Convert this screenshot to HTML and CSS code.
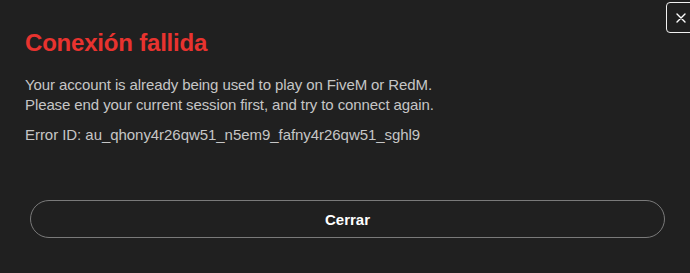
FILE: index.html
```html
<!DOCTYPE html>
<html lang="es">
<head>
<meta charset="utf-8">
<title>Conexión fallida</title>
<link rel="stylesheet" href="styles.css">
</head>
<body>
<div class="modal">
  <h1 class="title">Conexión fallida</h1>
  <p class="text">Your account is already being used to play on FiveM or RedM.<br>Please end your current session first, and try to connect again.</p>
  <p class="text error">Error ID: au_qhony4r26qw51_n5em9_fafny4r26qw51_sghl9</p>
  <button class="close-btn" type="button">Cerrar</button>
  <button class="x-btn" type="button" aria-label="Cerrar">
    <svg width="10" height="10" viewBox="0 0 10 10"><path d="M1 1 L9 9 M9 1 L1 9" stroke="#fff" stroke-width="1.4" stroke-linecap="round"/></svg>
  </button>
</div>
</body>
</html>
```
FILE: styles.css
```css
html, body {
  margin: 0;
  padding: 0;
  background: #202020;
}
body {
  width: 690px;
  height: 273px;
  overflow: hidden;
  font-family: "Liberation Sans", Arial, sans-serif;
}
.modal {
  position: relative;
  display: flex;
  flex-direction: column;
  align-items: flex-start;
  padding: 29px 25px 0 25px;
  height: 273px;
  box-sizing: border-box;
}
.title {
  margin: 0;
  font-size: 24px;
  line-height: 28px;
  font-weight: 700;
  letter-spacing: -0.2px;
  color: #e8332f;
}
.text {
  margin: 18px 0 0 0;
  font-size: 15px;
  line-height: 20px;
  letter-spacing: -0.1px;
  color: #c6c6c6;
}
.text.error {
  margin-top: 10px;
  letter-spacing: -0.05px;
}
.close-btn {
  margin: 55px 0 0 5px;
  width: 635px;
  height: 38px;
  border: 1.5px solid #7a7a7a;
  border-radius: 19px;
  background: transparent;
  color: #fff;
  font-family: "Liberation Sans", Arial, sans-serif;
  font-weight: 700;
  font-size: 15px;
  padding: 0;
}
.x-btn {
  position: absolute;
  top: 2px;
  left: 666px;
  width: 32px;
  height: 31px;
  border: 1.5px solid #f0f0f0;
  border-radius: 4px;
  background: transparent;
  padding: 0 0 0 0;
  display: flex;
  align-items: center;
  justify-content: flex-start;
  box-sizing: border-box;
}
.x-btn svg {
  margin-left: 9px;
}
```
